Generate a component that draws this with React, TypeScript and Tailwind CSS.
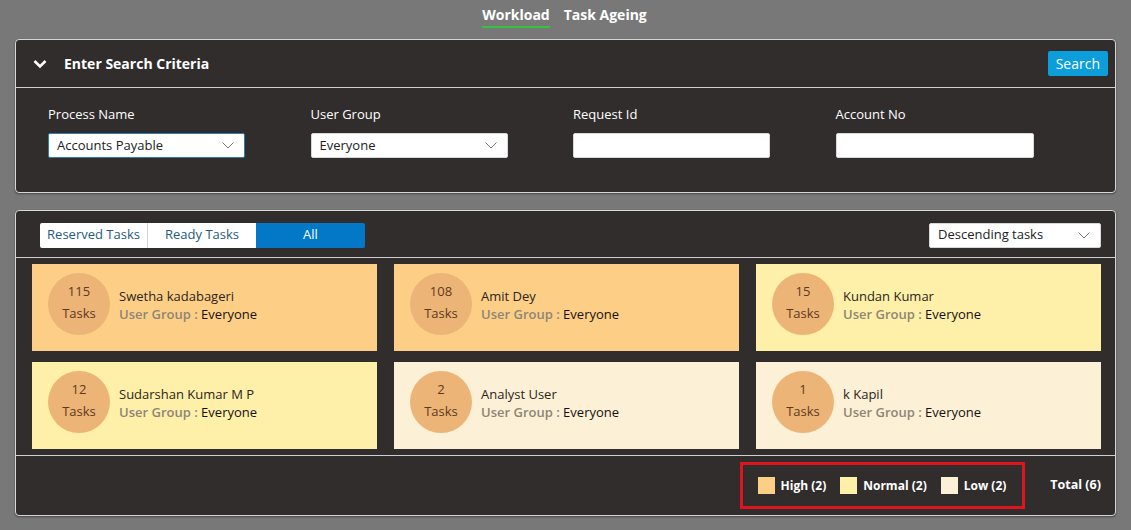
import { useState } from 'react'

type Priority = 'high' | 'normal' | 'low'

const WORKERS: { name: string; tasks: number; group: string; priority: Priority }[] = [
  { name: 'Swetha kadabageri', tasks: 115, group: 'Everyone', priority: 'high' },
  { name: 'Amit Dey', tasks: 108, group: 'Everyone', priority: 'high' },
  { name: 'Kundan Kumar', tasks: 15, group: 'Everyone', priority: 'normal' },
  { name: 'Sudarshan Kumar M P', tasks: 12, group: 'Everyone', priority: 'normal' },
  { name: 'Analyst User', tasks: 2, group: 'Everyone', priority: 'low' },
  { name: 'k Kapil', tasks: 1, group: 'Everyone', priority: 'low' },
]

const CARD_BG: Record<Priority, string> = {
  high: 'bg-[#fdcf86]',
  normal: 'bg-[#fff0a9]',
  low: 'bg-[#fcf0d6]',
}

function Chevron() {
  return (
    <svg width="12" height="7" viewBox="0 0 12 7" fill="none" className="shrink-0">
      <path d="M0.5 0.5L6 6L11.5 0.5" stroke="#777" strokeWidth="1" />
    </svg>
  )
}

function SelectBox(props: { value: string; width: string; focused?: boolean }) {
  const { value, width, focused } = props
  return (
    <div
      className={`flex h-[25px] items-center justify-between rounded-[2px] bg-white pl-[8px] pr-[10px] text-[13px] text-[#222] ${width} ${
        focused ? 'border border-[#2e7fb0]' : 'border border-[#d8d8d8]'
      }`}
    >
      <span>{value}</span>
      <Chevron />
    </div>
  )
}

function Field(props: { label: string; children: React.ReactNode }) {
  return (
    <div className="flex flex-col">
      <div className="h-[20px] text-[13px] leading-[20px] text-white">{props.label}</div>
      <div className="mt-[9px]">{props.children}</div>
    </div>
  )
}

function TaskCard(props: { name: string; tasks: number; group: string; priority: Priority }) {
  const { name, tasks, group, priority } = props
  return (
    <div className={`flex h-[87px] items-center pl-[16px] ${CARD_BG[priority]}`}>
      <div className="-mt-[7px] flex h-[62px] w-[62px] shrink-0 flex-col items-center justify-center rounded-full bg-[#edb477] pb-[4px] text-[13px] leading-[22px] text-[#5e3820]">
        <span>{tasks}</span>
        <span>Tasks</span>
      </div>
      <div className="ml-[9px] -mt-[6px] flex flex-col text-[13px] leading-[18px]">
        <span className="text-[#2b2420]">{name}</span>
        <span>
          <span className="font-semibold text-[#8d8676]">User Group : </span>
          <span className="text-[#15110f]">{group}</span>
        </span>
      </div>
    </div>
  )
}

export default function App() {
  const [tab, setTab] = useState<'workload' | 'ageing'>('workload')
  const [filter, setFilter] = useState<'reserved' | 'ready' | 'all'>('all')

  const counts = {
    high: WORKERS.filter((w) => w.priority === 'high').length,
    normal: WORKERS.filter((w) => w.priority === 'normal').length,
    low: WORKERS.filter((w) => w.priority === 'low').length,
  }

  return (
    <div
      className="min-h-[530px] w-full bg-[#787878] px-[15px] pb-[14px]"
      style={{ fontFamily: '"Open Sans", "Liberation Sans", sans-serif' }}
    >
      <div className="flex h-[39px] justify-center gap-[14px] pr-[2px]">
        <button
          type="button"
          onClick={() => setTab('workload')}
          className={`mt-[3px] h-[25px] border-b-[2px] text-[14px] font-bold leading-[20px] text-white ${
            tab === 'workload' ? 'border-[#36c23a]' : 'border-transparent'
          }`}
        >
          Workload
        </button>
        <button
          type="button"
          onClick={() => setTab('ageing')}
          className={`mt-[3px] h-[25px] border-b-[2px] text-[14px] font-bold leading-[20px] text-white ${
            tab === 'ageing' ? 'border-[#36c23a]' : 'border-transparent'
          }`}
        >
          Task Ageing
        </button>
      </div>

      <div className="rounded-[4px] border border-[#d6d6d6] bg-[#312d2d] shadow-[0_1px_2px_rgba(0,0,0,0.4)]">
        <div className="flex h-[48px] items-center justify-between border-b border-[#cfcfcf] pl-[17px] pr-[7px]">
          <div className="flex items-center gap-[17px]">
            <svg width="14" height="10" viewBox="0 0 14 10" fill="none">
              <path d="M1.5 2L7 7.5L12.5 2" stroke="white" strokeWidth="2.6" />
            </svg>
            <span className="text-[14px] font-bold text-white">Enter Search Criteria</span>
          </div>
          <button
            type="button"
            className="h-[25px] rounded-[2px] bg-[#0c9ddb] px-[8px] text-[14px] text-white"
          >
            Search
          </button>
        </div>
        <div className="grid h-[104px] grid-cols-4 gap-0 pl-[32px] pr-[17px] pt-[16px]">
          <Field label="Process Name">
            <SelectBox value="Accounts Payable" width="w-[197px]" focused />
          </Field>
          <Field label="User Group">
            <SelectBox value="Everyone" width="w-[197px]" />
          </Field>
          <Field label="Request Id">
            <div className="h-[25px] w-[197px] rounded-[2px] border border-[#d8d8d8] bg-white" />
          </Field>
          <Field label="Account No">
            <div className="h-[25px] w-[198px] rounded-[2px] border border-[#d8d8d8] bg-white" />
          </Field>
        </div>
      </div>

      <div className="mt-[17px] rounded-[4px] border border-[#d6d6d6] bg-[#312d2d] shadow-[0_1px_2px_rgba(0,0,0,0.4)]">
        <div className="flex h-[47px] items-center justify-between border-b border-[#cfcfcf] pl-[24px] pr-[14px] pt-[2px]">
          <div className="flex h-[25px] overflow-hidden rounded-[2px] text-[13px]">
            <button
              type="button"
              onClick={() => setFilter('reserved')}
              className={`w-[108px] border-r border-[#d5d5d5] ${
                filter === 'reserved' ? 'bg-[#0278c6] text-white' : 'bg-white text-[#245b7d]'
              }`}
            >
              Reserved Tasks
            </button>
            <button
              type="button"
              onClick={() => setFilter('ready')}
              className={`w-[108px] ${
                filter === 'ready' ? 'bg-[#0278c6] text-white' : 'bg-white text-[#245b7d]'
              }`}
            >
              Ready Tasks
            </button>
            <button
              type="button"
              onClick={() => setFilter('all')}
              className={`w-[109px] ${
                filter === 'all' ? 'bg-[#0278c6] text-white' : 'bg-white text-[#245b7d]'
              }`}
            >
              All
            </button>
          </div>
          <SelectBox value="Descending tasks" width="w-[172px]" />
        </div>

        <div className="grid grid-cols-3 gap-x-[17px] gap-y-[11px] border-b border-[#cfcfcf] pb-[6px] pl-[16px] pr-[14px] pt-[6px]">
          {WORKERS.map((w) => (
            <TaskCard key={w.name} {...w} />
          ))}
        </div>

        <div className="flex h-[59px] items-center justify-end pr-[14px]">
          <div className="flex h-[47px] items-center gap-[14px] border-[3px] border-[#e0141e] pl-[15px] pr-[16px] text-[12px] font-bold text-white">
            <span className="flex items-center gap-[6px]">
              <span className="h-[17px] w-[17px] bg-[#fdcf86]" />
              High ({counts.high})
            </span>
            <span className="flex items-center gap-[6px]">
              <span className="h-[17px] w-[17px] bg-[#fff0a9]" />
              Normal ({counts.normal})
            </span>
            <span className="flex items-center gap-[6px]">
              <span className="h-[17px] w-[17px] bg-[#fcf0d6]" />
              Low ({counts.low})
            </span>
          </div>
          <span className="ml-[25px] text-[12.5px] font-bold text-white">Total ({WORKERS.length})</span>
        </div>
      </div>
    </div>
  )
}
